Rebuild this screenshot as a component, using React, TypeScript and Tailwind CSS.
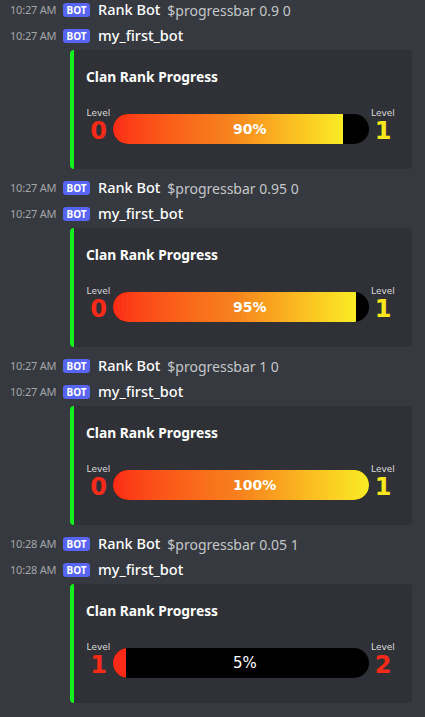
const groups = [
  { time: "10:27 AM", cmd: "$progressbar 0.9 0", pct: 90, from: "0", to: "1", toColor: "text-[#f8e71c]", bold: true },
  { time: "10:27 AM", cmd: "$progressbar 0.95 0", pct: 95, from: "0", to: "1", toColor: "text-[#f8e71c]", bold: true },
  { time: "10:27 AM", cmd: "$progressbar 1 0", pct: 100, from: "0", to: "1", toColor: "text-[#f8e71c]", bold: true },
  { time: "10:28 AM", cmd: "$progressbar 0.05 1", pct: 5, from: "1", to: "2", toColor: "text-[#f92a17]", bold: false },
];

export default function App() {
  return (
    <div className="w-[425px] h-[717px] overflow-hidden bg-[#36393f] font-['Noto_Sans',sans-serif]">
      {groups.map((g, i) => (
        <div key={i} className="h-[178px]">
          <MessageRow time={g.time} name="Rank Bot" text={g.cmd} />
          <div className="mt-[6px]">
            <MessageRow time={g.time} name="my_first_bot" />
          </div>
          <Embed pct={g.pct} from={g.from} to={g.to} toColor={g.toColor} bold={g.bold} />
        </div>
      ))}
    </div>
  );
}

function MessageRow({ time, name, text }: { time: string; name: string; text?: string }) {
  return (
    <div className="flex h-[20px] items-center">
      <span className="w-[63px] pl-[10px] text-[11px] tracking-[-0.2px] text-[#a3a6aa] whitespace-nowrap">{time}</span>
      <span className="flex h-[14px] w-[27px] items-center justify-center rounded-[3px] bg-[#5865f2] text-[10px] font-bold text-white leading-none">
        BOT
      </span>
      <span className="ml-[8px] text-[14.5px] font-medium text-white whitespace-nowrap">{name}</span>
      {text && (
        <span className="ml-[7px] text-[14px] text-[#c4c6c9] whitespace-nowrap">{text}</span>
      )}
    </div>
  );
}

function Embed({
  pct,
  from,
  to,
  toColor,
  bold,
}: {
  pct: number;
  from: string;
  to: string;
  toColor: string;
  bold: boolean;
}) {
  return (
    <div className="ml-[70px] mt-[4px] flex h-[119px] w-[342px] rounded-[4px] bg-[#2f3136]">
      <div className="w-[4px] rounded-l-[4px] bg-[#14f01e]" />
      <div className="flex-1 pl-[12px] pt-[18px]">
        <div className="h-[18px] text-[13.8px] font-bold leading-[18px] text-white">Clan Rank Progress</div>
        {/* progress image */}
        <div className="mt-[21px] flex items-start font-['DejaVu_Sans',sans-serif]">
          <div className="flex w-[25px] flex-col items-center">
            <span className="text-[9px] leading-[12px] text-[#dcdcdc]">Level</span>
            <span className="text-[24px] font-bold leading-[24px] text-[#f92a17]">{from}</span>
          </div>
          <div className="relative ml-[2px] mt-[7px] flex h-[30px] w-[256px] items-center overflow-hidden rounded-full bg-black">
            {pct >= 10 ? (
              <div
                className="absolute inset-y-0 left-0 bg-gradient-to-r from-[#fc2a16] via-[#f6821d] to-[#f8ec24]"
                style={{ width: `${pct}%` }}
              />
            ) : (
              <div className="absolute inset-y-0 left-0 bg-[#f92a17]" style={{ width: `${pct}%` }} />
            )}
            <span
              className={`relative pl-[120px] text-white ${
                bold ? "text-[14px] font-bold" : "text-[15px] font-normal"
              }`}
            >
              {pct}%
            </span>
          </div>
          <div className="ml-[1px] flex w-[26px] flex-col items-center">
            <span className="text-[9px] leading-[12px] text-[#dcdcdc]">Level</span>
            <span className={`text-[24px] font-bold leading-[24px] ${toColor}`}>{to}</span>
          </div>
        </div>
      </div>
    </div>
  );
}
